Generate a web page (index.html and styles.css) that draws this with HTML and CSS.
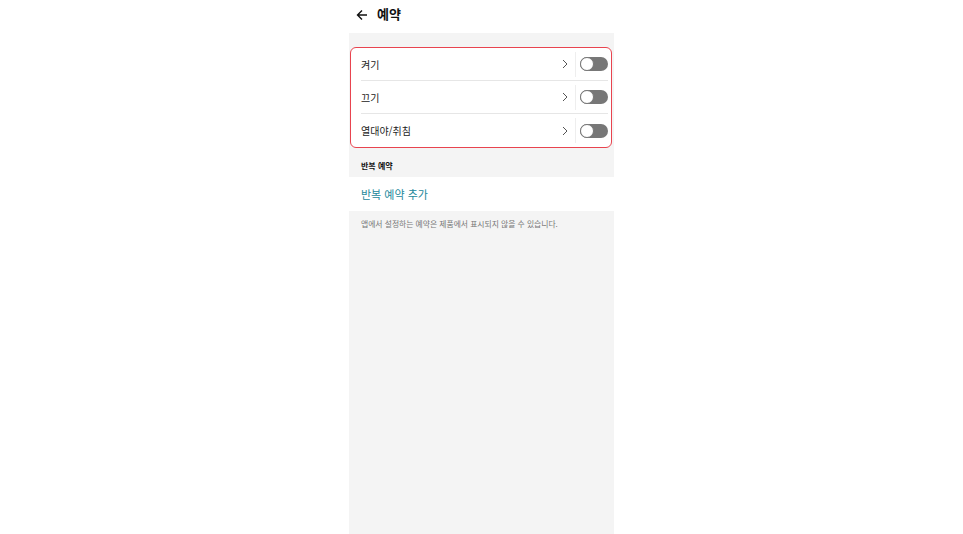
FILE: index.html
```html
<!DOCTYPE html>
<html lang="ko">
<head>
    <meta charset="UTF-8">
    <meta name="viewport" content="width=device-width, initial-scale=1.0">
    <title>예약</title>
    <link rel="stylesheet" href="styles.css">
</head>
<body>
    <div class="phone">
        <div class="header">
            <svg class="back" width="12" height="12" viewBox="0 0 12 12">
                <path d="M11 6H1.5M6 1.5L1.5 6L6 10.5" fill="none" stroke="#111" stroke-width="1.4"/>
            </svg>
            <span class="title">예약</span>
        </div>

        <div class="gap"></div>

        <div class="list">
            <div class="row">
                <span class="label">켜기</span>
                <svg class="chev" width="6" height="10" viewBox="0 0 6 10"><path d="M1 1l4 4-4 4" fill="none" stroke="#555" stroke-width="1"/></svg>
                <span class="divider"></span>
                <span class="toggle"><span class="knob"></span></span>
            </div>
            <div class="row">
                <span class="label">끄기</span>
                <svg class="chev" width="6" height="10" viewBox="0 0 6 10"><path d="M1 1l4 4-4 4" fill="none" stroke="#555" stroke-width="1"/></svg>
                <span class="divider"></span>
                <span class="toggle"><span class="knob"></span></span>
            </div>
            <div class="row">
                <span class="label">열대야/취침</span>
                <svg class="chev" width="6" height="10" viewBox="0 0 6 10"><path d="M1 1l4 4-4 4" fill="none" stroke="#555" stroke-width="1"/></svg>
                <span class="divider"></span>
                <span class="toggle"><span class="knob"></span></span>
            </div>
        </div>

        <div class="section-title">반복 예약</div>
        <div class="add-row">반복 예약 추가</div>
        <div class="note">앱에서 설정하는 예약은 제품에서 표시되지 않을 수 있습니다.</div>
    </div>
</body>
</html>
```

FILE: styles.css
```css
html, body {
    margin: 0;
    height: 100%;
}
body {
    background: #fff;
    font-family: "Noto Sans CJK KR", "Noto Sans", sans-serif;
    color: #222;
}
.phone {
    width: 265px;
    height: 534px;
    margin: 0 auto;
    background: #f4f4f4;
    display: flex;
    flex-direction: column;
}
.header {
    height: 33px;
    background: #fff;
    display: flex;
    align-items: center;
    padding-left: 7px;
    gap: 9px;
}
.back {
    margin-top: -4px;
}
.title {
    font-size: 13px;
    font-weight: bold;
    color: #111;
    margin-top: -6px;
}
.gap {
    height: 14px;
}
.list {
    background: #fff;
    margin: 0 2px 0 1px;
    border: 1.5px solid #e8444f;
    border-radius: 6px;
    padding: 0 3px 0 10px;
}
.row {
    height: 33px;
    box-sizing: border-box;
    display: flex;
    align-items: center;
    border-bottom: 1px solid #e6e6e6;
}
.row:last-child {
    border-bottom: none;
}
.label {
    flex: 1;
    font-size: 10px;
    color: #222;
}
.chev {
    display: block;
}
.divider {
    width: 1px;
    height: 25px;
    background: #eee;
    margin: 0 4px 0 7px;
}
.toggle {
    width: 28px;
    height: 14px;
    background: #777;
    border-radius: 7px;
    position: relative;
}
.knob {
    position: absolute;
    left: 0;
    top: 0;
    width: 12px;
    height: 12px;
    border-radius: 50%;
    background: #fff;
    border: 1px solid #777;
}
.section-title {
    height: 29px;
    box-sizing: border-box;
    padding: 0 0 6px 12px;
    display: flex;
    align-items: flex-end;
    font-size: 8px;
    font-weight: bold;
    color: #111;
}
.add-row {
    height: 34px;
    background: #fff;
    padding-left: 12px;
    display: flex;
    align-items: center;
    font-size: 11px;
    color: #23889b;
}
.note {
    padding: 7px 0 0 12px;
    font-size: 7.8px;
    color: #777;
}
```
